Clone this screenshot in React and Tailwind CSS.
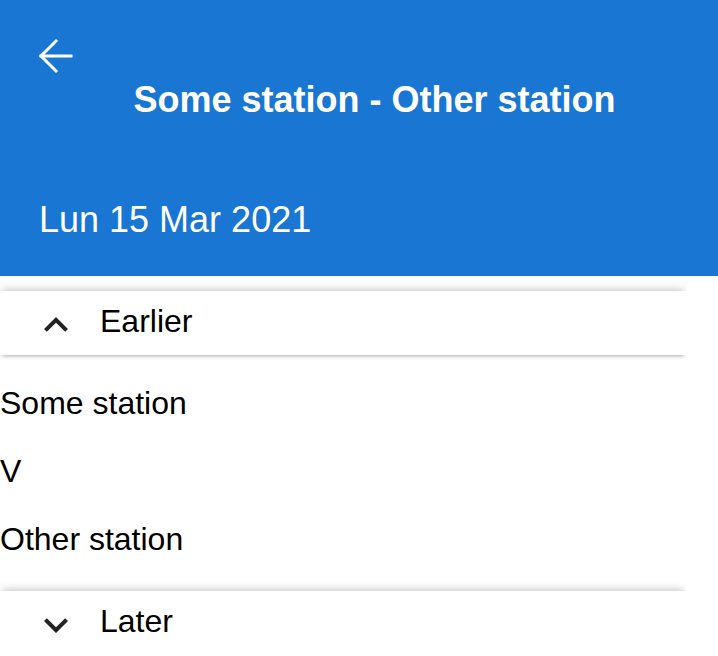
import React from 'react';

const font = { fontFamily: '"Liberation Sans", Arial, sans-serif' };

const BackArrow = () => (
  <svg width="48" height="48" viewBox="0 0 48 48" fill="none" stroke="white" strokeWidth="3" strokeLinecap="square">
    <path d="M9 24H39" />
    <path d="M24 9L9 24L24 39" />
  </svg>
);

const Chevron = ({ up }) => (
  <svg width="48" height="48" viewBox="0 0 24 24" fill="#222">
    {up ? (
      <path d="M12 8l-6 6 1.41 1.41L12 10.83l4.59 4.58L18 14z" />
    ) : (
      <path d="M16.59 8.59L12 13.17 7.41 8.59 6 10l6 6 6-6z" />
    )}
  </svg>
);

const Expander = ({ label, up, tall }) => (
  <div
    className={
      (tall ? 'h-[80px] ' : 'h-16 ') +
      'flex w-[686px] bg-white pl-8 shadow-[0_-3px_8px_-2px_rgba(0,0,0,0.25),0_3px_4px_-2px_rgba(0,0,0,0.3)] [clip-path:inset(-12px_0_-12px_0)]'
    }
  >
    <div className="mt-[10px]">
      <Chevron up={up} />
    </div>
    <span className="ml-[20px] mt-[12px] text-[32px] leading-[36px] text-black">{label}</span>
  </div>
);

export default function App() {
  return (
    <div className="min-h-screen w-[718px] bg-white" style={font}>
      <header className="flex h-[276px] flex-col bg-[#1976d2] text-white">
        <div className="pl-8 pt-8">
          <BackArrow />
        </div>
        <h1 className="mt-[2px] pl-[80px] pr-[49px] text-center text-[36px] font-bold leading-[36px]">
          Some station - Other station
        </h1>
        <p className="mt-[84px] pl-[39px] text-[36px] leading-[36px]">Lun 15 Mar 2021</p>
      </header>

      <div className="mt-[15px]">
        <Expander label="Earlier" up />
      </div>

      <div className="mt-[30px] flex flex-col gap-8 text-[32px] leading-[36px] text-black">
        <p>Some station</p>
        <p>V</p>
        <p>Other station</p>
      </div>

      <div className="mt-[34px]">
        <Expander label="Later" tall />
      </div>
    </div>
  );
}
